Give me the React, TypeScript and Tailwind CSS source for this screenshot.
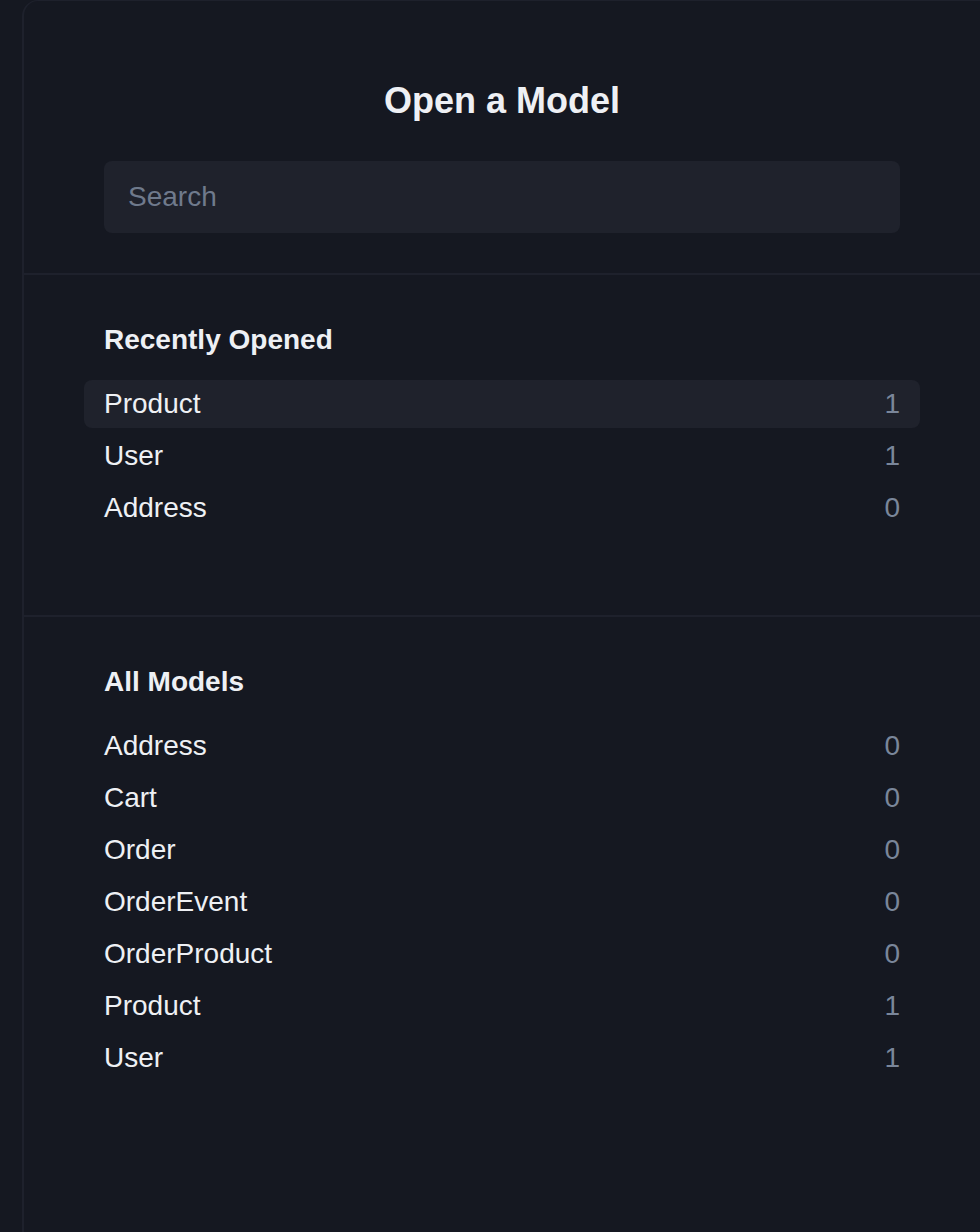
import React from "react";

const recent = [
  { name: "Product", count: 1 },
  { name: "User", count: 1 },
  { name: "Address", count: 0 },
];

const all = [
  { name: "Address", count: 0 },
  { name: "Cart", count: 0 },
  { name: "Order", count: 0 },
  { name: "OrderEvent", count: 0 },
  { name: "OrderProduct", count: 0 },
  { name: "Product", count: 1 },
  { name: "User", count: 1 },
];

function Row({ name, count, active }: { name: string; count: number; active?: boolean }) {
  return (
    <div
      className={`flex h-[48px] items-center justify-between rounded-[8px] px-[20px] ${
        active ? "bg-[#1f222c]" : ""
      }`}
    >
      <span className="text-[28px] leading-none text-[#eef0f4]">{name}</span>
      <span className="text-[28px] leading-none text-[#7a869a]">{count}</span>
    </div>
  );
}

export default function App() {
  return (
    <div
      className="h-[1232px] w-[980px] overflow-hidden bg-[#151821]"
      style={{ fontFamily: '"Liberation Sans", Arial, sans-serif' }}
    >
      <div className="ml-[22px] h-[1240px] w-[958px] rounded-tl-[16px] border-l-2 border-t border-[#1e212c] bg-[#151821]">
        <div className="flex flex-col items-center px-[80px] pb-[40px] pt-[79px]">
          <h1 className="text-[36px] font-bold leading-[42px] text-[#eef0f4]">Open a Model</h1>
          <div className="mt-[39px] flex h-[72px] w-full items-center rounded-[8px] bg-[#1f222c] px-[24px]">
            <span className="text-[28px] leading-none text-[#6f7a8c]">Search</span>
          </div>
        </div>
        <div className="border-t-2 border-[#1e212c] px-[60px] pb-[83px] pt-[45px]">
          <h2 className="px-[20px] text-[28px] font-bold leading-[40px] text-[#eef0f4]">Recently Opened</h2>
          <div className="mt-[20px] flex flex-col gap-[4px]">
            {recent.map((r, i) => (
              <Row key={r.name + i} name={r.name} count={r.count} active={i === 0} />
            ))}
          </div>
        </div>
        <div className="border-t-2 border-[#1e212c] px-[60px] pt-[45px]">
          <h2 className="px-[20px] text-[28px] font-bold leading-[40px] text-[#eef0f4]">All Models</h2>
          <div className="mt-[20px] flex flex-col gap-[4px]">
            {all.map((r, i) => (
              <Row key={r.name + i} name={r.name} count={r.count} />
            ))}
          </div>
        </div>
      </div>
    </div>
  );
}
